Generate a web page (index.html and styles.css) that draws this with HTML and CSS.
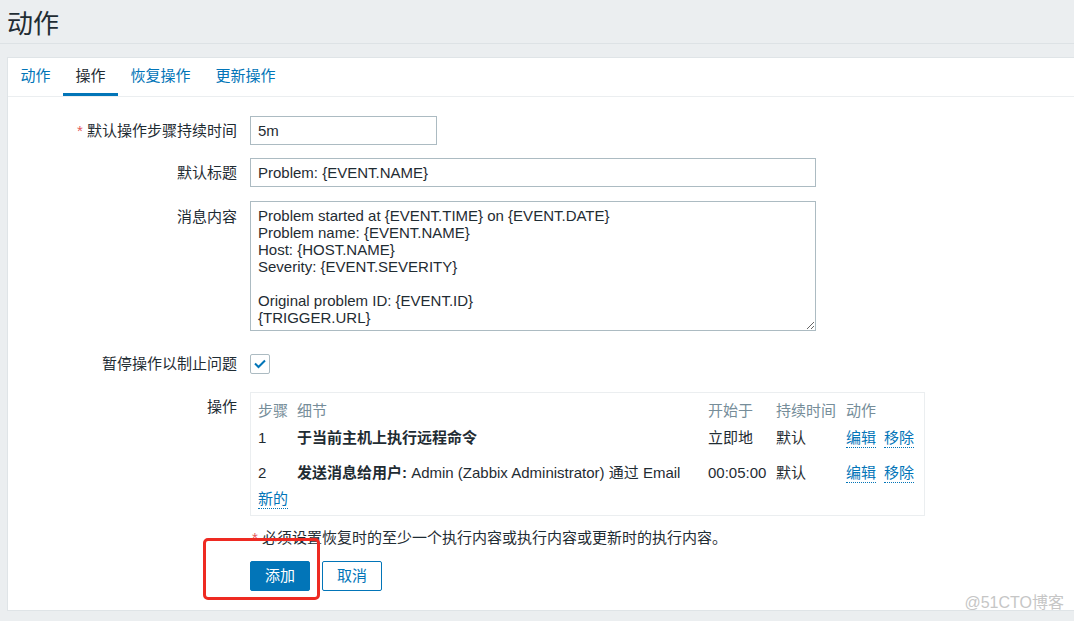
FILE: index.html
```html
<!DOCTYPE html>
<html lang="zh-CN">
<head>
<meta charset="utf-8">
<title>动作</title>
<link rel="stylesheet" href="styles.css">
</head>
<body>
<header class="page-header"><h1 class="page-title">动作</h1></header>
<main class="card">
  <ul class="tabs">
    <li class="tab">动作</li>
    <li class="tab tab-active">操作</li>
    <li class="tab">恢复操作</li>
    <li class="tab">更新操作</li>
  </ul>
  <form class="form">
    <div class="row row-input">
      <label class="label"><span class="req">*</span> 默认操作步骤持续时间</label>
      <div class="field"><input class="input input-short" value="5m"></div>
    </div>
    <div class="row row-input">
      <label class="label">默认标题</label>
      <div class="field"><input class="input input-wide" value="Problem: {EVENT.NAME}"></div>
    </div>
    <div class="row row-text">
      <label class="label label-top">消息内容</label>
      <div class="field"><textarea class="textarea">Problem started at {EVENT.TIME} on {EVENT.DATE}
Problem name: {EVENT.NAME}
Host: {HOST.NAME}
Severity: {EVENT.SEVERITY}

Original problem ID: {EVENT.ID}
{TRIGGER.URL}</textarea></div>
    </div>
    <div class="row row-check">
      <label class="label">暂停操作以制止问题</label>
      <div class="field">
        <span class="checkbox"><svg width="12" height="10" viewBox="0 0 12 10"><path d="M1 4.5 L4.5 8 L11 1.5" fill="none" stroke="#0275b8" stroke-width="2"/></svg></span>
      </div>
    </div>
    <div class="row row-ops">
      <label class="label label-ops">操作</label>
      <div class="field">
        <div class="ops">
          <table class="ops-table">
            <thead>
              <tr><th class="c-step">步骤</th><th class="c-detail">细节</th><th class="c-start">开始于</th><th class="c-dur">持续时间</th><th class="c-act">动作</th></tr>
            </thead>
            <tbody>
              <tr class="r1"><td>1</td><td><b>于当前主机上执行远程命令</b></td><td>立即地</td><td>默认</td><td><div class="actions"><a class="link">编辑</a><a class="link">移除</a></div></td></tr>
              <tr class="r2"><td>2</td><td><b>发送消息给用户:</b> Admin (Zabbix Administrator) 通过 Email</td><td>00:05:00</td><td>默认</td><td><div class="actions"><a class="link">编辑</a><a class="link">移除</a></div></td></tr>
            </tbody>
          </table>
          <div class="ops-new"><a class="link">新的</a></div>
        </div>
      </div>
    </div>
    <div class="row row-note">
      <span></span>
      <div class="note"><span class="req">*</span> 必须设置恢复时的至少一个执行内容或执行内容或更新时的执行内容。</div>
    </div>
    <div class="row row-buttons">
      <span></span>
      <div class="buttons">
        <button type="button" class="btn btn-primary">添加</button>
        <button type="button" class="btn btn-alt">取消</button>
      </div>
    </div>
  </form>
</main>
<div class="annotation"></div>
<div class="watermark">@51CTO博客</div>
</body>
</html>
```
FILE: styles.css
```css
html, body {
  margin: 0;
  padding: 0;
}
body {
  background: #ebeef0;
  color: #1f2c33;
  font-family: "Liberation Sans", "Noto Sans CJK SC", sans-serif;
  font-size: 15px;
  line-height: 18px;
  height: 621px;
  overflow: hidden;
  position: relative;
}
.page-header {
  height: 43px;
  border-bottom: 1px solid #dde2e5;
  box-sizing: content-box;
}
.page-title {
  margin: 0;
  padding: 7px 0 0 7px;
  font-family: "Noto Sans CJK SC", sans-serif;
  font-weight: normal;
  font-size: 26px;
  line-height: 30px;
  color: #1f2c33;
}
.card {
  display: block;
  margin: 13px 0 0 7px;
  background: #fff;
  border: 1px solid #dfe4e7;
  border-right: none;
}
.tabs {
  list-style: none;
  margin: 0;
  padding: 0;
  display: flex;
  border-bottom: 1px solid #ebeef0;
}
.tab {
  padding: 0 12.5px;
  height: 35px;
  line-height: 35px;
  border-bottom: 3px solid transparent;
  color: #0275b8;
}
.tab-active {
  color: #1f2c33;
  border-bottom-color: #0275b8;
}
.form {
  display: flex;
  flex-direction: column;
  gap: 13px;
  padding: 19px 0 19px;
}
.row {
  display: grid;
  grid-template-columns: 229px 1fr;
  column-gap: 13px;
  align-items: center;
}
.row-text { margin-top: 1px; align-items: start; }
.row-check { margin-top: 10px; }
.row-ops { margin-top: 5px; align-items: start; }
.row-note { margin-top: 0; }
.row-buttons { margin-top: 1px; }
.label {
  text-align: right;
  color: #1f2c33;
}
.label-top { padding-top: 7px; }
.label-ops { padding-top: 6px; }
.req { color: #e45959; }
.input {
  box-sizing: border-box;
  height: 29px;
  border: 1px solid #acbbc2;
  padding: 0 7px;
  font: inherit;
  color: #1f2c33;
  background: #fff;
  outline: none;
  display: block;
}
.input-short { width: 187px; }
.input-wide { width: 566px; }
.textarea {
  box-sizing: border-box;
  display: block;
  width: 566px;
  height: 130px;
  border: 1px solid #acbbc2;
  padding: 5px 7px 0;
  font-family: "Liberation Sans", "Noto Sans CJK SC", sans-serif;
  font-size: 15px;
  line-height: 17px;
  color: #1f2c33;
  overflow: hidden;
  outline: none;
  margin: 0;
}
.checkbox {
  box-sizing: border-box;
  width: 20px;
  height: 20px;
  border: 1px solid #acbbc2;
  border-radius: 2px;
  display: flex;
  align-items: center;
  justify-content: center;
  background: #fff;
}
.ops {
  box-sizing: border-box;
  width: 675px;
  border: 1px solid #ebeef0;
  padding: 0 10px 6px 7px;
}
.ops-table {
  width: 100%;
  border-collapse: collapse;
  table-layout: fixed;
}
.ops-table th,
.ops-table td {
  padding: 0;
  text-align: left;
  vertical-align: top;
  white-space: nowrap;
}
.ops-table th {
  font-weight: normal;
  color: #768d99;
  padding-top: 9px;
}
.c-step { width: 39px; }
.c-detail { width: 411px; }
.c-start { width: 68px; }
.c-dur { width: 70px; }
.ops-table .r1 td { padding-top: 9px; }
.ops-table .r2 td { padding-top: 16px; }
.ops-table b { font-weight: bold; }
.actions {
  display: flex;
  gap: 8px;
}
.link {
  display: block;
  color: #0275b8;
  border-bottom: 1px dotted #0275b8;
  line-height: 18px;
  cursor: pointer;
}
.ops-new {
  margin-top: 7px;
  display: flex;
}
.note { padding-left: 2px; }
.buttons {
  display: flex;
  gap: 12px;
}
.btn {
  box-sizing: border-box;
  height: 30px;
  width: 60px;
  padding: 0;
  border-radius: 2px;
  font-family: "Liberation Sans", "Noto Sans CJK SC", sans-serif;
  font-size: 15px;
  line-height: 28px;
  cursor: pointer;
}
.btn-primary {
  background: #0275b8;
  border: 1px solid #0275b8;
  color: #fff;
}
.btn-alt {
  background: #fff;
  border: 1px solid #0275b8;
  color: #0275b8;
}
.annotation {
  position: absolute;
  left: 203px;
  top: 538px;
  width: 117px;
  height: 62px;
  box-sizing: border-box;
  border: 3px solid #ee2a22;
  border-radius: 5px;
}
.watermark {
  position: absolute;
  right: 10px;
  top: 594px;
  font-size: 16px;
  line-height: 18px;
  color: #c6c6c6;
}
```
